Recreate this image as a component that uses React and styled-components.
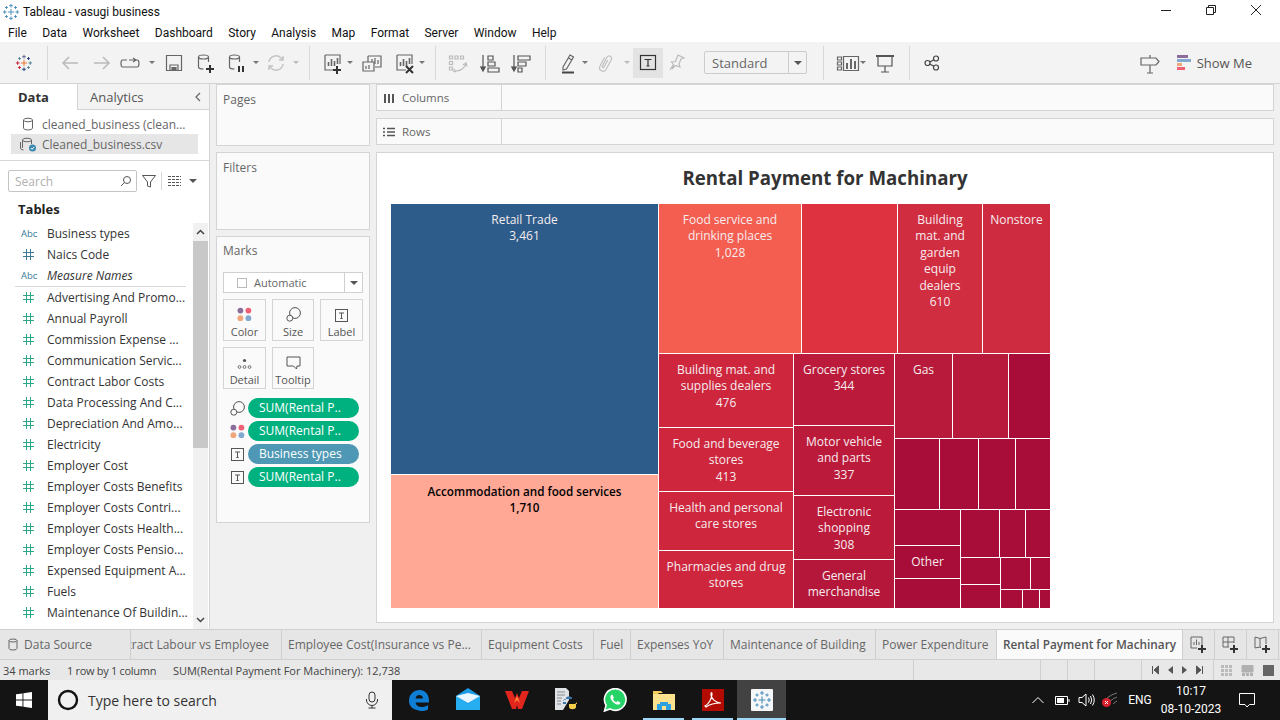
import React from 'react';
import styled, { createGlobalStyle } from 'styled-components';

const UI_FONT = '"Open Sans", "Liberation Sans", sans-serif';
const WIN_FONT = 'Roboto, "Liberation Sans", sans-serif';

const GlobalStyle = createGlobalStyle`
  html, body {
    margin: 0;
    padding: 0;
    width: 1280px;
    height: 720px;
    overflow: hidden;
    background: #f0f0f0;
  }
  * { box-sizing: border-box; }
`;

const Page = styled.div`
  width: 1280px;
  height: 720px;
  display: flex;
  flex-direction: column;
  font-family: ${UI_FONT};
  color: #555;
`;

/* window chrome */
const TitleBar = styled.div`
  height: 24px;
  background: #fff;
  display: flex;
  align-items: center;
  padding-left: 2px;
  font-family: ${WIN_FONT};
  font-size: 12px;
  color: #111;
  gap: 3px;
`;

const WindowButtons = styled.div`
  margin-left: auto;
  padding-right: 2px;
  display: flex;
  align-self: flex-start;
`;

const WindowButton = styled.div`
  width: 45px;
  height: 20px;
  display: flex;
  align-items: center;
  justify-content: center;
`;

const MenuBar = styled.div`
  height: 19px;
  background: #fff;
  display: flex;
  align-items: center;
  padding-left: 8px;
  gap: 15.4px;
  font-family: ${WIN_FONT};
  font-size: 12px;
  color: #111;
`;

/* toolbar */
const Toolbar = styled.div`
  height: 41px;
  background: #f3f3f3;
  display: flex;
  align-items: center;
  padding: 4px 0 4px 8px;
  flex: none;
`;

const ToolItem = styled.div`
  width: ${p => p.$w}px;
  height: 30px;
  flex: none;
  display: flex;
  align-items: center;
  justify-content: center;
  background: ${p => (p.$active ? '#e3e3e3' : 'transparent')};
`;

const ToolSep = styled.div`
  width: ${p => p.$w}px;
  height: 34px;
  flex: none;
  display: flex;
  justify-content: center;
  &::after {
    content: '';
    width: 1px;
    height: 100%;
    background: #d8d8d8;
  }
`;

const Caret = styled.span`
  width: 0;
  height: 0;
  flex: none;
  border-left: 3px solid transparent;
  border-right: 3px solid transparent;
  border-top: 3px solid ${p => (p.$dim ? '#bbb' : '#777')};
`;

const StandardSelect = styled.div`
  width: 103px;
  height: 23px;
  margin-left: 13px;
  flex: none;
  border: 1px solid #ccc;
  border-radius: 2px;
  display: flex;
  align-items: center;
  justify-content: space-between;
  font-size: 13px;
  color: #666;
  padding-left: 7px;
`;

const SelectArrow = styled.div`
  width: 18px;
  height: 100%;
  border-left: 1px solid #ccc;
  display: flex;
  align-items: center;
  justify-content: center;
`;

const LargeCaret = styled(Caret)`
  border-left-width: 4px;
  border-right-width: 4px;
  border-top-width: 4px;
  border-top-color: #555;
  margin-left: ${p => p.$ml || 0}px;
`;

const ToolbarRight = styled.div`
  margin-left: auto;
  display: flex;
  align-items: center;
  gap: 15px;
  padding-right: 28px;
  font-size: 13px;
  color: #555;
`;

const ShowMe = styled.div`
  display: flex;
  align-items: center;
  gap: 6px;
`;

/* main */
const Main = styled.div`
  height: 546px;
  flex: none;
  display: flex;
  background: #f0f0f0;
  border-top: 1px solid #d4d4d4;
`;

const DataPanel = styled.div`
  width: 210px;
  flex: none;
  background: #fafafa;
  border-right: 1px solid #d4d4d4;
  display: flex;
  flex-direction: column;
`;

const PanelTabs = styled.div`
  height: 26px;
  flex: none;
  display: flex;
  align-items: center;
  font-size: 13px;
`;

const DataTab = styled.div`
  width: 78px;
  height: 100%;
  display: flex;
  align-items: center;
  padding-left: 18px;
  font-weight: 700;
  color: #333;
  background: #fff;
  border-right: 1px solid #d4d4d4;
`;

const AnalyticsTab = styled.div`
  flex: 1;
  height: 100%;
  display: flex;
  align-items: center;
  justify-content: space-between;
  padding: 0 7px 0 12px;
  color: #555;
  background: #f3f3f3;
  border-bottom: 1px solid #d4d4d4;
`;

const Sources = styled.div`
  height: 51px;
  flex: none;
  padding-top: 4px;
  background: #fff;
  border-bottom: 1px solid #d8d8d8;
`;

const SourceRow = styled.div`
  height: 20px;
  margin: 0 11px;
  padding-left: 9px;
  display: flex;
  align-items: center;
  gap: 6px;
  font-size: 12px;
  color: #666;
  background: ${p => (p.$selected ? '#e6e6e6' : 'transparent')};
`;

const SourceIcon = styled.span`
  width: 16px;
  flex: none;
  display: flex;
  justify-content: center;
`;

const SearchRow = styled.div`
  height: 39px;
  flex: none;
  display: flex;
  align-items: center;
  padding: 1px 0 0 8px;
  background: #fff;
`;

const SearchBox = styled.div`
  width: 129px;
  height: 22px;
  border: 1px solid #c4c4c4;
  border-radius: 2px;
  display: flex;
  align-items: center;
  justify-content: space-between;
  padding: 0 4px 0 6px;
  font-size: 12px;
  color: #b0b0b0;
  margin-right: 4px;
`;

const SearchSep = styled.div`
  width: 1px;
  height: 18px;
  background: #d8d8d8;
  margin: 0 6px 0 4px;
`;

const TablesTitle = styled.div`
  height: 17px;
  flex: none;
  padding: 0 0 0 18px;
  display: flex;
  align-items: center;
  font-size: 13px;
  font-weight: 700;
  color: #222;
  background: #fff;
`;

const FieldArea = styled.div`
  flex: 1;
  min-height: 0;
  padding-top: 6px;
  display: flex;
  background: #fff;
`;

const FieldList = styled.div`
  width: 193px;
  flex: none;
  overflow: hidden;
`;

const FieldRow = styled.div`
  height: 21px;
  margin-left: 15px;
  display: flex;
  align-items: center;
  font-size: 12px;
  color: #333;
  font-style: ${p => (p.$italic ? 'italic' : 'normal')};
  white-space: nowrap;
`;

const FieldType = styled.span`
  width: 32px;
  flex: none;
  display: flex;
  align-items: center;
  padding-left: ${p => (p.$abc ? 6 : 8)}px;
  font-style: normal;
  font-size: 9.5px;
  line-height: 1;
  color: #3b7a99;
`;

const FieldDivider = styled.div`
  height: 1px;
  background: #d8d8d8;
  margin: 0 7px 0 15px;
`;

const Scrollbar = styled.div`
  width: 15px;
  flex: none;
  margin-right: 1px;
  background: #f1f1f1;
  display: flex;
  flex-direction: column;
`;

const ScrollArrow = styled.div`
  height: 18px;
  flex: none;
  display: flex;
  align-items: center;
  justify-content: center;
`;

const ScrollThumb = styled.div`
  height: 207px;
  flex: none;
  background: #c8c8c8;
`;

const ScrollFill = styled.div`
  flex: 1;
`;

/* shelves column */
const ShelfColumn = styled.div`
  width: 154px;
  margin-left: 6px;
  flex: none;
  display: flex;
  flex-direction: column;
  gap: 6px;
`;

const Card = styled.div`
  height: ${p => p.$h}px;
  flex: none;
  background: #fafafa;
  border: 1px solid #d4d4d4;
  padding: 6px 6px 0;
  font-size: 12px;
  color: #666;
`;

const MarksTitle = styled.div`
  margin-bottom: 13px;
  line-height: 16px;
`;

const MarksSelect = styled.div`
  height: 21px;
  margin-bottom: 6px;
  background: #fff;
  border: 1px solid #d0d0d0;
  display: flex;
  align-items: center;
  font-size: 11px;
  color: #666;
`;

const MarkCheck = styled.span`
  width: 10px;
  height: 10px;
  margin: 0 7px 0 13px;
  border: 1px solid #bbb;
  background: #fff;
`;

const MarkSelectArrow = styled.div`
  margin-left: auto;
  width: 18px;
  height: 100%;
  border-left: 1px solid #d0d0d0;
  display: flex;
  align-items: center;
  justify-content: center;
`;

const MarkGrid = styled.div`
  display: grid;
  grid-template-columns: 43px 42px 43px;
  grid-auto-rows: 42px;
  column-gap: 6px;
  row-gap: 6px;
`;

const MarkButton = styled.div`
  background: #fafafa;
  border: 1px solid #d4d4d4;
  display: flex;
  flex-direction: column;
  align-items: center;
  justify-content: flex-end;
  padding-bottom: 1px;
  font-size: 11px;
  line-height: 15px;
  color: #555;
  gap: 2px;
`;

const PillList = styled.div`
  margin-top: 9px;
  display: flex;
  flex-direction: column;
  gap: 3px;
`;

const PillRow = styled.div`
  display: flex;
  align-items: center;
  height: 20px;
  padding-left: 7px;
  gap: 4px;
`;

const PillIcon = styled.div`
  width: 14px;
  height: 14px;
  flex: none;
  display: flex;
  align-items: center;
  justify-content: center;
`;

const Pill = styled.div`
  width: 111px;
  height: 20px;
  border-radius: 10px;
  padding-left: 11px;
  background: ${p => (p.$blue ? '#4e98b5' : '#00b180')};
  color: #fff;
  font-size: 12px;
  line-height: 20px;
  white-space: nowrap;
`;

/* view */
const ViewColumn = styled.div`
  width: 898px;
  margin-left: 6px;
  flex: none;
  display: flex;
  flex-direction: column;
  gap: 7px;
`;

const Shelf = styled.div`
  height: 27px;
  flex: none;
  display: flex;
  background: #fafafa;
  border: 1px solid #d4d4d4;
`;

const ShelfLabel = styled.div`
  width: 125px;
  flex: none;
  border-right: 1px solid #d4d4d4;
  display: flex;
  align-items: center;
  padding-left: 6px;
  gap: 7px;
  font-size: 11.5px;
  color: #666;
`;

const Viz = styled.div`
  height: 471px;
  flex: none;
  background: #fff;
  border: 1px solid #d4d4d4;
  padding-left: 13px;
  display: flex;
  flex-direction: column;
`;

const VizTitle = styled.div`
  width: 870px;
  height: 51px;
  flex: none;
  text-align: center;
  padding-top: 11px;
  font-size: 18.7px;
  line-height: 27px;
  font-weight: 700;
  color: #333;
`;

const Treemap = styled.div`
  width: 659px;
  height: 404px;
  margin-left: 1px;
  flex: none;
  display: flex;
  gap: 1px;
  background: #fff;
`;

const Split = styled.div`
  display: flex;
  flex-direction: ${p => p.$dir};
  flex: 0 0 ${p => p.$size}px;
  gap: 1px;
  background: #fff;
`;

const Leaf = styled.div`
  flex: 0 0 ${p => p.$size}px;
  background: ${p => p.$bg};
  color: ${p => (p.$dark ? '#000' : '#f6ecee')};
  font-size: ${p => (p.$dark ? 11.7 : 12)}px;
  font-weight: ${p => (p.$dark ? 600 : 400)};
  line-height: 16.4px;
  text-align: center;
  padding: 8px 2px 0;
  overflow: hidden;
`;

/* sheet tabs */
const TabBar = styled.div`
  height: 31px;
  flex: none;
  display: flex;
  background: #e6e6e6;
  border-top: 1px solid #d0d0d0;
  border-bottom: 1px solid #d0d0d0;
  font-size: 12px;
  color: #666;
`;

const SheetTab = styled.div`
  width: ${p => p.$w}px;
  flex: none;
  border-right: 1px solid #cfcfcf;
  overflow: hidden;
  white-space: nowrap;
  display: flex;
  align-items: center;
  justify-content: ${p => (p.$clip ? 'flex-end' : 'flex-start')};
  padding: ${p => (p.$clip ? '0 12px 0 0' : `0 0 0 ${p.$pl || 6}px`)};
  gap: 6px;
  ${p => p.$active && `
    background: #fafafa;
    font-size: 11.8px;
    font-weight: 600;
    padding-bottom: 2px;
    color: #555;
  `}
`;

const AddTab = styled.div`
  width: 32px;
  flex: none;
  border-right: 1px solid #cfcfcf;
  display: flex;
  align-items: center;
  justify-content: center;
`;

/* status bar */
const StatusBar = styled.div`
  height: 20px;
  flex: none;
  display: flex;
  align-items: center;
  background: #e8e8e8;
  font-size: 11px;
  color: #444;
`;

const StatusText = styled.span`
  width: ${p => p.$w}px;
  flex: none;
  white-space: nowrap;
  padding-left: ${p => p.$pl || 0}px;
  letter-spacing: ${p => (p.$tight ? -0.3 : 0)}px;
`;

const StatusCell = styled.div`
  width: ${p => p.$w}px;
  height: 100%;
  flex: none;
  border-left: 1px solid #d0d0d0;
  display: flex;
  align-items: center;
  justify-content: center;
  gap: ${p => p.$gap || 0}px;
`;

/* windows taskbar */
const Taskbar = styled.div`
  height: 40px;
  flex: none;
  display: flex;
  align-items: center;
  background: #141414;
  color: #fff;
  font-family: ${WIN_FONT};
`;

const StartButton = styled.div`
  width: 48px;
  height: 100%;
  flex: none;
  display: flex;
  align-items: center;
  justify-content: center;
`;

const TaskSearch = styled.div`
  width: 344px;
  height: 100%;
  flex: none;
  background: #f0f0f0;
  display: flex;
  align-items: center;
  padding: 0 13px 0 9px;
  gap: 9px;
  color: #333;
  font-family: ${UI_FONT};
  font-size: 14px;
  span { flex: 1; }
`;

const TaskApps = styled.div`
  display: flex;
  height: 100%;
  padding-left: 2px;
`;

const TaskApp = styled.div`
  width: 49px;
  height: 100%;
  flex: none;
  position: relative;
  display: flex;
  align-items: center;
  justify-content: center;
  background: ${p => (p.$active ? '#424242' : 'transparent')};
  ${p => p.$open && `
    &::after {
      content: '';
      position: absolute;
      left: ${p.$active ? 0 : 4}px;
      right: ${p.$active ? 0 : 4}px;
      bottom: 0;
      height: 2px;
      background: #9fd8f5;
    }
  `}
`;

const Tray = styled.div`
  margin-left: auto;
  padding-right: 10px;
  height: 100%;
  display: flex;
  align-items: center;
  font-size: 12px;
`;

const TrayItem = styled.div`
  width: ${p => p.$w}px;
  flex: none;
  display: flex;
  align-items: center;
  justify-content: center;
`;

const Clock = styled.div`
  width: 66px;
  flex: none;
  text-align: center;
  line-height: 18px;
  font-size: 12px;
`;

/* drawn icons */
const IconSvg = styled.svg`
  flex: none;
  overflow: visible;
`;

const Svg = ({ w = 24, h = 24, children, stroke = '#666', sw = 1.2 }) => (
  <IconSvg width={w} height={h} viewBox={`0 0 ${w} ${h}`} fill="none" stroke={stroke} strokeWidth={sw}>
    {children}
  </IconSvg>
);

const TableauMark = ({ size = 20, mono }) => {
  const c = mono
    ? ['#4d8fbb', '#4d8fbb', '#4d8fbb', '#4d8fbb', '#4d8fbb']
    : ['#e8762d', '#59879b', '#c72037', '#1f447e', '#5b6591'];
  const plus = (x, y, r, col, k) => (
    <path key={k} d={`M${x - r} ${y}H${x + r}M${x} ${y - r}V${y + r}`} stroke={col} strokeWidth={1.1} />
  );
  return (
    <IconSvg width={size} height={size} viewBox="0 0 20 20" fill="none">
      {plus(10, 10, 3.5, c[0], 'a')}
      {plus(10, 3, 2, c[4], 'b')}
      {plus(10, 17, 2, c[3], 'c')}
      {plus(3, 10, 2, c[2], 'd')}
      {plus(17, 10, 2, c[1], 'e')}
      {plus(5, 5, 1.6, c[1], 'f')}
      {plus(15, 5, 1.6, c[3], 'g')}
      {plus(5, 15, 1.6, c[2], 'h')}
      {plus(15, 15, 1.6, c[1], 'i')}
    </IconSvg>
  );
};

const Cylinder = ({ h = 20, children }) => (
  <Svg h={h}>
    <ellipse cx="9.5" cy="6" rx="5" ry="2" />
    <path d="M4.5 6V16q0 2 5 2M14.5 6v5" />
    {children}
  </Svg>
);

const DarkPlus = ({ x, y }) => <path d={`M${x - 4} ${y}H${x + 4}M${x} ${y - 4}V${y + 4}`} stroke="#333" strokeWidth="2" />;

const BarSheet = ({ children }) => (
  <Svg>
    <path d="M6 4H21V13M15 19H6V4" />
    <path d="M9.5 15V11M12.5 15V8M15.5 15V10M18.5 13V7" strokeWidth="1.6" />
    {children}
  </Svg>
);

const TBox = ({ size = 13 }) => (
  <IconSvg width={size} height={size} viewBox="0 0 13 13" fill="none" stroke="#555">
    <rect x=".5" y=".5" width="12" height="12" />
    <path d="M4 4H9M6.5 4V9.5M5.3 9.5H7.7" />
  </IconSvg>
);

const ColorDots = () => (
  <IconSvg width="15" height="15" viewBox="0 0 15 15">
    <circle cx="3.4" cy="3.6" r="2.9" fill="#8a6d9b" />
    <circle cx="11.4" cy="3.6" r="2.9" fill="#ef6074" />
    <circle cx="3.4" cy="11.2" r="2.9" fill="#f0a679" />
    <circle cx="11.4" cy="11.2" r="2.9" fill="#83a9d2" />
  </IconSvg>
);

const SizeGlyph = () => (
  <IconSvg width="15" height="15" viewBox="0 0 15 15" fill="none" stroke="#555">
    <circle cx="9" cy="6" r="5.4" />
    <circle cx="3.8" cy="11.2" r="3" fill="#fafafa" />
  </IconSvg>
);

const HashIcon = ({ stroke = '#2fa58a' }) => (
  <Svg w={11} h={11} stroke={stroke} sw={1}>
    <path d="M3.500 0v11M7.500 0v11M0 3.500h11M0 7.500h11" />
  </Svg>
);

const DARK = '#a70d38';

const treemap = [
  {
    dir: 'column',
    size: 267,
    kids: [
      { size: 270, bg: '#2e5c8a', text: ['Retail Trade', '3,461'] },
      { size: 133, bg: '#ffa896', dark: true, text: ['Accommodation and food services', '1,710'] },
    ],
  },
  {
    dir: 'column',
    size: 391,
    kids: [
      {
        dir: 'row',
        size: 149,
        kids: [
          { size: 142, bg: '#f35e50', text: ['Food service and', 'drinking places', '1,028'] },
          { size: 95, bg: '#de3241' },
          { size: 84, bg: '#d12d41', text: ['Building', 'mat. and', 'garden', 'equip', 'dealers', '610'] },
          { size: 67, bg: '#ce2a40', text: ['Nonstore'] },
        ],
      },
      {
        dir: 'row',
        size: 254,
        kids: [
          {
            dir: 'column',
            size: 134,
            kids: [
              { size: 73, bg: '#cd263d', text: ['Building mat. and', 'supplies dealers', '476'] },
              { size: 63, bg: '#cd263d', text: ['Food and beverage', 'stores', '413'] },
              { size: 58, bg: '#cd263d', text: ['Health and personal', 'care stores'] },
              { size: 57, bg: '#cd263d', text: ['Pharmacies and drug', 'stores'] },
            ],
          },
          {
            dir: 'column',
            size: 100,
            kids: [
              { size: 71, bg: '#bb1a3b', text: ['Grocery stores', '344'] },
              { size: 69, bg: '#bb1a3b', text: ['Motor vehicle', 'and parts', '337'] },
              { size: 63, bg: '#bb1a3b', text: ['Electronic', 'shopping', '308'] },
              { size: 48, bg: '#b5173a', text: ['General', 'merchandise'] },
            ],
          },
          {
            dir: 'column',
            size: 155,
            kids: [
              {
                dir: 'row',
                size: 84,
                kids: [
                  { size: 57, bg: '#b81a3b', text: ['Gas'] },
                  { size: 55, bg: '#b81a3b' },
                  { size: 41, bg: DARK },
                ],
              },
              {
                dir: 'row',
                size: 70,
                kids: [
                  { size: 44, bg: DARK },
                  { size: 38, bg: DARK },
                  { size: 36, bg: DARK },
                  { size: 34, bg: DARK },
                ],
              },
              {
                dir: 'row',
                size: 98,
                kids: [
                  {
                    dir: 'column',
                    size: 65,
                    kids: [
                      { size: 35, bg: DARK },
                      { size: 32, bg: DARK, text: ['Other'] },
                      { size: 29, bg: DARK },
                    ],
                  },
                  {
                    dir: 'column',
                    size: 89,
                    kids: [
                      {
                        dir: 'row',
                        size: 47,
                        kids: [
                          { size: 38, bg: DARK },
                          { size: 25, bg: DARK },
                          { size: 24, bg: DARK },
                        ],
                      },
                      {
                        dir: 'row',
                        size: 50,
                        kids: [
                          {
                            dir: 'column',
                            size: 39,
                            kids: [
                              { size: 26, bg: DARK },
                              { size: 23, bg: DARK },
                            ],
                          },
                          {
                            dir: 'column',
                            size: 49,
                            kids: [
                              {
                                dir: 'row',
                                size: 31,
                                kids: [
                                  { size: 29, bg: DARK },
                                  { size: 19, bg: DARK },
                                ],
                              },
                              {
                                dir: 'row',
                                size: 18,
                                kids: [
                                  { size: 21, bg: DARK },
                                  { size: 16, bg: DARK },
                                  { size: 10, bg: DARK },
                                ],
                              },
                            ],
                          },
                        ],
                      },
                    ],
                  },
                ],
              },
            ],
          },
        ],
      },
    ],
  },
];

function TreeNode({ node }) {
  if (node.kids) {
    return (
      <Split $dir={node.dir} $size={node.size}>
        {node.kids.map((kid, i) => (
          <TreeNode key={i} node={kid} />
        ))}
      </Split>
    );
  }
  return (
    <Leaf $size={node.size} $bg={node.bg} $dark={node.dark}>
      {(node.text || []).map(line => (
        <div key={line}>{line}</div>
      ))}
    </Leaf>
  );
}

const fields = [
  'Advertising And Promo...',
  'Annual Payroll',
  'Commission Expense ...',
  'Communication Servic...',
  'Contract Labor Costs',
  'Data Processing And C...',
  'Depreciation And Amo...',
  'Electricity',
  'Employer Cost',
  'Employer Costs Benefits',
  'Employer Costs Contri...',
  'Employer Costs Health...',
  'Employer Costs Pensio...',
  'Expensed Equipment A...',
  'Fuels',
  'Maintenance Of Buildin...',
];

const sheetTabs = [
  ['Employee Cost(Insurance vs Pe...', 200],
  ['Equipment Costs', 112],
  ['Fuel', 37],
  ['Expenses YoY', 93],
  ['Maintenance of Building', 152],
  ['Power Expenditure', 121],
];

export default function App() {
  return (
    <Page>
      <GlobalStyle />
      <TitleBar>
        <TableauMark size={18} mono />
        <span>Tableau - vasugi business</span>
        <WindowButtons>
          <WindowButton>
            <Svg w={12} h={12} stroke="#222" sw={1}><path d="M1 6.5H11" /></Svg>
          </WindowButton>
          <WindowButton>
            <Svg w={12} h={12} stroke="#222" sw={1}><path d="M1.5 3.5h7v7h-7zM3.5 3.5v-2h7v7h-2" /></Svg>
          </WindowButton>
          <WindowButton>
            <Svg w={12} h={12} stroke="#222" sw={1}><path d="M1 1l10 10M11 1L1 11" /></Svg>
          </WindowButton>
        </WindowButtons>
      </TitleBar>
      <MenuBar>
        {['File', 'Data', 'Worksheet', 'Dashboard', 'Story', 'Analysis', 'Map', 'Format', 'Server', 'Window', 'Help'].map(m => (
          <span key={m}>{m}</span>
        ))}
      </MenuBar>
      <Toolbar>
        <ToolItem $w={32}><TableauMark size={18} /></ToolItem>
        <ToolSep $w={14} />
        <ToolItem $w={32}>
          <Svg stroke="#bbb" sw={1.6}><path d="M20 12H5M11 6l-6 6 6 6" /></Svg>
        </ToolItem>
        <ToolItem $w={32}>
          <Svg stroke="#bbb" sw={1.6}><path d="M4 12H19M13 6l6 6-6 6" /></Svg>
        </ToolItem>
        <ToolItem $w={26}>
          <Svg><path d="M8 9H3.500Q2 9 2 12.500T3.500 16H18q2 0 2-3.500T18 9h-8M14 7l3 2-3 2" /></Svg>
        </ToolItem>
        <ToolItem $w={16}><Caret /></ToolItem>
        <ToolItem $w={28}>
          <Svg><path d="M4.500 4.500h15v15h-15zM8 19V14h8v5" /><path d="M10 16.500h4v3h-4z" fill="#666" /></Svg>
        </ToolItem>
        <ToolItem $w={36}>
          <Cylinder h={24}><DarkPlus x={16} y={18} /></Cylinder>
        </ToolItem>
        <ToolItem $w={26}>
          <Cylinder h={24}><path d="M14 15v6M18 15v6" stroke="#333" strokeWidth="2" /></Cylinder>
        </ToolItem>
        <ToolItem $w={12}><Caret /></ToolItem>
        <ToolItem $w={28}>
          <Svg stroke="#c4c4c4" sw={1.5}><path d="M5 11a7 7 0 0 1 12-4l2 2M19 13a7 7 0 0 1-12 4l-2-2M19 5v4h-4M5 19v-4h4" /></Svg>
        </ToolItem>
        <ToolItem $w={12}><Caret $dim /></ToolItem>
        <ToolSep $w={14} />
        <ToolItem $w={30}><BarSheet><DarkPlus x={18} y={19} /></BarSheet></ToolItem>
        <ToolItem $w={8}><Caret /></ToolItem>
        <ToolItem $w={36}>
          <Svg>
            <path d="M8 5h13v11h-6M8 5v6" />
            <path d="M3 11h11v9H3z" />
            <path d="M12 11V8M15 13V7M18 13V9M6 18v-3M9 18v-4" />
          </Svg>
        </ToolItem>
        <ToolItem $w={26}>
          <BarSheet><path d="M15 15l7 7M22 15l-7 7" stroke="#333" strokeWidth="2" /></BarSheet>
        </ToolItem>
        <ToolItem $w={12}><Caret /></ToolItem>
        <ToolSep $w={14} />
        <ToolItem $w={30}>
          <Svg stroke="#bbb">
            <path d="M4.500 5h3v3h-3zM10 5h3v3h-3zM15.500 5h3v3h-3zM4.500 10.500h3v3h-3zM4.500 16h3v3h-3z" />
            <path d="M10 20q8 0 11-7M18 14l3-2 1 3.500M10 18l-1.500 2 2.500 1" />
          </Svg>
        </ToolItem>
        <ToolItem $w={36}>
          <Svg stroke="#555">
            <path d="M5 4V19M2.500 15.500L5 20l2.500-4.500" fill="#555" />
            <path d="M10 5h5v4h-5zM10 11h7v4h-7zM10 17h11v4h-11z" />
          </Svg>
        </ToolItem>
        <ToolItem $w={26}>
          <Svg stroke="#555">
            <path d="M5 4V19M2.500 15.500L5 20l2.500-4.500" fill="#555" />
            <path d="M9 5h12v4H9zM9 11h8v4H9zM9 17h4v4H9z" />
          </Svg>
        </ToolItem>
        <ToolSep $w={22} />
        <ToolItem $w={24}>
          <Svg>
            <path d="M7 16L14 4l3.500 2-7 12-3.500 1zM12.500 7l3.500 2" />
            <path d="M6 21.500H18" stroke="#444" strokeWidth="2" />
          </Svg>
        </ToolItem>
        <ToolItem $w={10}><Caret /></ToolItem>
        <ToolItem $w={30}>
          <Svg stroke="#c0c0c0" sw={1.2}>
            <path transform="rotate(28 12 12)" d="M9 7v10a3.500 3.500 0 0 0 7 0V6a2.500 2.500 0 0 0-5 0v10a1 1 0 0 0 2 0V8" />
          </Svg>
        </ToolItem>
        <ToolItem $w={13}><Caret $dim /></ToolItem>
        <ToolItem $w={30} $active>
          <Svg>
            <rect x="4.500" y="4.500" width="15" height="14" stroke="#333" />
            <path d="M8.500 8.500h7M12 8.500v6.500M10.500 15h3" stroke="#333" />
          </Svg>
        </ToolItem>
        <ToolItem $w={28}>
          <Svg stroke="#bbb">
            <path d="M13 4l6 3-3 1-2 5 1 3-4.500-1.500L7 18l1.500-4.500L6.500 11l4-.5z" />
            <path d="M8 14l-3 5" />
          </Svg>
        </ToolItem>
        <StandardSelect>
          <span>Standard</span>
          <SelectArrow><LargeCaret /></SelectArrow>
        </StandardSelect>
        <ToolSep $w={32} />
        <ToolItem $w={18}>
          <Svg>
            <path d="M1.500 6h4v3h-4zM1.500 11h4v3h-4zM1.500 16h4v3h-4zM7.500 5.500h15v14h-15z" />
            <path d="M11 18v-6M15 18V8M19 18v-8" strokeWidth="2" />
          </Svg>
        </ToolItem>
        <ToolItem $w={12}><Caret /></ToolItem>
        <ToolItem $w={32}>
          <Svg stroke="#555">
            <path d="M3 5H21" strokeWidth="2" />
            <path d="M5 5v10h14V5M12 15v6M8 21h8" />
          </Svg>
        </ToolItem>
        <ToolSep $w={16} />
        <ToolItem $w={30}>
          <Svg stroke="#444" sw={1.2}>
            <circle cx="7.500" cy="12" r="2.500" />
            <circle cx="16" cy="7.500" r="2.500" />
            <circle cx="16" cy="16.500" r="2.500" />
            <path d="M9.800 11l4-2.300M9.800 13l4 2.300" />
          </Svg>
        </ToolItem>
        <ToolbarRight>
          <Svg h={24}>
            <path d="M3 7h15l3 3.500-3 3.500H3zM12 4v3M12 14v8M9 22h6" />
          </Svg>
          <ShowMe>
            <IconSvg width="14" height="16" viewBox="0 0 14 16">
              <rect x="0" y="0" width="11" height="3" fill="#8a6d9b" />
              <rect x="0" y="4" width="14" height="3" fill="#83a9d2" />
              <rect x="0" y="8" width="5" height="3" fill="#f0a679" />
              <rect x="0" y="12" width="8" height="3" fill="#ef6074" />
            </IconSvg>
            <span>Show Me</span>
          </ShowMe>
        </ToolbarRight>
      </Toolbar>
      <Main>
        <DataPanel>
          <PanelTabs>
            <DataTab>Data</DataTab>
            <AnalyticsTab>
              <span>Analytics</span>
              <Svg w={8} h={10} stroke="#666"><path d="M6 1L2 5l4 4" /></Svg>
            </AnalyticsTab>
          </PanelTabs>
          <Sources>
            <SourceRow>
              <SourceIcon>
                <Svg w={12} h={14} stroke="#666" sw={1}>
                  <ellipse cx="6" cy="3" rx="4.500" ry="1.800" />
                  <path d="M1.500 3v8q0 2 4.500 2t4.500-2V3" />
                </Svg>
              </SourceIcon>
              <span>cleaned_business (clean...</span>
            </SourceRow>
            <SourceRow $selected>
              <SourceIcon>
                <Svg w={16} h={16} stroke="#666" sw={1}>
                  <ellipse cx="7" cy="4" rx="4.500" ry="1.800" />
                  <path d="M2.500 4v8M11.500 4v4M0.500 6v6q0 2 3 2" />
                  <circle cx="12.500" cy="12" r="3.500" fill="#3b89b0" stroke="none" />
                  <path d="M10.800 12l1.300 1.300 2-2.300" stroke="#fff" />
                </Svg>
              </SourceIcon>
              <span>Cleaned_business.csv</span>
            </SourceRow>
          </Sources>
          <SearchRow>
            <SearchBox>
              <span>Search</span>
              <Svg w={12} h={12} stroke="#555" sw={1}><circle cx="7" cy="5" r="3.500" /><path d="M4.500 7.500L1 11" /></Svg>
            </SearchBox>
            <Svg w={16} h={16} stroke="#555" sw={1}><path d="M1.500 2.500h13L9.500 9v5l-3-1V9z" /></Svg>
            <SearchSep />
            <Svg w={14} h={12} stroke="#555" sw={1}><path d="M0 1.500h13M0 4.500h13M0 7.500h13M0 10.500h13" strokeDasharray="3 1" /></Svg>
            <LargeCaret $ml={7} />
          </SearchRow>
          <TablesTitle>Tables</TablesTitle>
          <FieldArea>
            <FieldList>
              <FieldRow><FieldType $abc>Abc</FieldType>Business types</FieldRow>
              <FieldRow><FieldType><HashIcon stroke="#3b7a99" /></FieldType>Naics Code</FieldRow>
              <FieldRow $italic><FieldType $abc>Abc</FieldType>Measure Names</FieldRow>
              <FieldDivider />
              {fields.map(name => (
                <FieldRow key={name}><FieldType><HashIcon /></FieldType>{name}</FieldRow>
              ))}
            </FieldList>
            <Scrollbar>
              <ScrollArrow>
                <Svg w={9} h={6} stroke="#444" sw={1.5}><path d="M1 5l3.500-3.500L8 5" /></Svg>
              </ScrollArrow>
              <ScrollThumb />
              <ScrollFill />
              <ScrollArrow>
                <Svg w={9} h={6} stroke="#444" sw={1.5}><path d="M1 1l3.500 3.500L8 1" /></Svg>
              </ScrollArrow>
            </Scrollbar>
          </FieldArea>
        </DataPanel>
        <ShelfColumn>
          <Card $h={62}>Pages</Card>
          <Card $h={78}>Filters</Card>
          <Card $h={287}>
            <MarksTitle>Marks</MarksTitle>
            <MarksSelect>
              <MarkCheck />
              Automatic
              <MarkSelectArrow><LargeCaret /></MarkSelectArrow>
            </MarksSelect>
            <MarkGrid>
              <MarkButton><ColorDots />Color</MarkButton>
              <MarkButton><SizeGlyph />Size</MarkButton>
              <MarkButton><TBox />Label</MarkButton>
              <MarkButton>
                <Svg w={15} h={12} stroke="#555" sw={0.8}>
                  <circle cx="7.500" cy="2.500" r="1.600" fill="#555" stroke="none" />
                  <circle cx="2.500" cy="9" r="1.400" />
                  <circle cx="7.500" cy="9" r="1.400" />
                  <circle cx="12.500" cy="9" r="1.400" />
                </Svg>
                Detail
              </MarkButton>
              <MarkButton>
                <Svg w={15} h={14} stroke="#555" sw={1}><path d="M1 1h13v9h-3l-.500 3-3-3H1z" /></Svg>
                Tooltip
              </MarkButton>
            </MarkGrid>
            <PillList>
              <PillRow><PillIcon><SizeGlyph /></PillIcon><Pill>SUM(Rental P..</Pill></PillRow>
              <PillRow><PillIcon><ColorDots /></PillIcon><Pill>SUM(Rental P..</Pill></PillRow>
              <PillRow><PillIcon><TBox /></PillIcon><Pill $blue>Business types</Pill></PillRow>
              <PillRow><PillIcon><TBox /></PillIcon><Pill>SUM(Rental P..</Pill></PillRow>
            </PillList>
          </Card>
        </ShelfColumn>
        <ViewColumn>
          <Shelf>
            <ShelfLabel>
              <Svg w={12} h={12} stroke="#555" sw={2}><path d="M2 2v9M6 2v9M10 2v9" /></Svg>
              Columns
            </ShelfLabel>
          </Shelf>
          <Shelf>
            <ShelfLabel>
              <Svg w={12} h={12} stroke="#555" sw={1.5}><path d="M0 2.500h2M4 2.500h8M0 6h2M4 6h8M0 9.500h2M4 9.500h8" /></Svg>
              Rows
            </ShelfLabel>
          </Shelf>
          <Viz>
            <VizTitle>Rental Payment for Machinary</VizTitle>
            <Treemap>
              {treemap.map((kid, i) => (
                <TreeNode key={i} node={kid} />
              ))}
            </Treemap>
          </Viz>
        </ViewColumn>
      </Main>
      <TabBar>
        <SheetTab $w={131} $pl={8}>
          <Svg w={10} h={13} stroke="#666" sw={1}>
            <ellipse cx="5" cy="2.500" rx="4" ry="1.500" />
            <path d="M1 2.500v8q0 1.500 4 1.500t4-1.500v-8" />
          </Svg>
          Data Source
        </SheetTab>
        <SheetTab $w={151} $clip>Contract Labour vs Employee</SheetTab>
        {sheetTabs.map(([name, w]) => (
          <SheetTab key={name} $w={w}>{name}</SheetTab>
        ))}
        <SheetTab $w={186} $active>Rental Payment for Machinary</SheetTab>
        <AddTab>
          <Svg w={18} h={18} stroke="#666" sw={1}>
            <path d="M1 1h11v8M7 12H1V1M4 9V6M6.500 9V3.500M9 9V6" />
            <DarkPlus x={12} y={13} />
          </Svg>
        </AddTab>
        <AddTab>
          <Svg w={18} h={18} stroke="#666" sw={1}>
            <path d="M1 1h11v6M7 11H1V1M1 6h11M6 1v10" />
            <DarkPlus x={12} y={13} />
          </Svg>
        </AddTab>
        <AddTab>
          <Svg w={18} h={18} stroke="#666" sw={1}>
            <path d="M1 1l5 1.500L12 1v7M7 12l-1-1-5 1V1M6 2.500V11" />
            <DarkPlus x={12} y={13} />
          </Svg>
        </AddTab>
      </TabBar>
      <StatusBar>
        <StatusText $w={67} $pl={3}>34 marks</StatusText>
        <StatusText $w={106} $tight>1 row by 1 column</StatusText>
        <StatusText $w={740}>SUM(Rental Payment For Machinery): 12,738</StatusText>
        <StatusCell $w={127} />
        <StatusCell $w={27} />
        <StatusCell $w={27} />
        <StatusCell $w={47} />
        <StatusCell $w={72} $gap={9}>
          <Svg w={7} h={8} stroke="#555" sw={1}><path d="M.5 0v8" /><path d="M6.500 0v8L2 4z" fill="#555" /></Svg>
          <Svg w={5} h={8} stroke="none"><path d="M5 0v8L0 4z" fill="#555" /></Svg>
          <Svg w={5} h={8} stroke="none"><path d="M0 0v8l5-4z" fill="#555" /></Svg>
          <Svg w={7} h={8} stroke="#555" sw={1}><path d="M6.500 0v8" /><path d="M.5 0v8L5 4z" fill="#555" /></Svg>
        </StatusCell>
        <StatusCell $w={67} $gap={10}>
          <Svg w={11} h={11} stroke="#bbb" sw={3}><path d="M0 1.500h11M0 5.500h11M0 9.500h11" strokeDasharray="3 1" /></Svg>
          <Svg w={11} h={11} stroke="#b0b0b0" sw={1}><path d="M0 .500h11v6.500H0z" fill="#b0b0b0" /><path d="M0 9.500h11" strokeWidth="3" strokeDasharray="3 1" /></Svg>
          <Svg w={11} h={11} stroke="none"><rect width="11" height="11" fill="#666" /></Svg>
        </StatusCell>
      </StatusBar>
      <Taskbar>
        <StartButton>
          <svg width="16" height="16" viewBox="0 0 16 16" fill="#fff">
            <path d="M0 2.300L6.500 1.400V7.500H0zM7.400 1.300L16 0V7.500H7.400zM0 8.400H6.500V14.600L0 13.700zM7.400 8.400H16V16L7.400 14.800z" />
          </svg>
        </StartButton>
        <TaskSearch>
          <Svg w={22} h={22} stroke="#111" sw={2.4}><circle cx="11" cy="11" r="9" /></Svg>
          <span>Type here to search</span>
          <Svg w={14} h={18} stroke="#333" sw={1}>
            <rect x="4" y="1" width="6" height="10" rx="3" />
            <path d="M1.500 8v1a5.500 5.500 0 0 0 11 0V8M7 14.500V17M3.500 17h7" />
          </Svg>
        </TaskSearch>
        <TaskApps>
          <TaskApp>
            <svg width="22" height="22" viewBox="0 0 22 22">
              <path d="M1 12C1 5 6 1 11.500 1S21 5 21 12v1.500H7.500c.5 3 3 4.500 6 4.500 2.500 0 4.500-.6 6.500-2v4.500c-2 1-4.500 1.500-7 1.500C6 21 1 18 1 12zM7.500 9.500H15C15 7.200 13.500 6 11.200 6S8 7.300 7.500 9.500z" fill="#0f7fd6" />
            </svg>
          </TaskApp>
          <TaskApp>
            <svg width="24" height="24" viewBox="0 0 24 24">
              <path d="M0 8L12 0l12 8v14H0z" fill="#1c9be6" />
              <path d="M0 8l12 8 12-8v14H0z" fill="#26aef0" />
              <path d="M0 8l12 7 12-7-12-3z" fill="#eaf6ff" />
            </svg>
          </TaskApp>
          <TaskApp>
            <svg width="24" height="18" viewBox="0 0 24 18">
              <path d="M0 0h7l3 7 2-5 2 5 3-7h7l-7 18h-4l-1-4-1 4H7z" fill="#e3261d" />
              <path d="M9 12l3-7 3 7-3-3z" fill="#ff8a3c" />
            </svg>
          </TaskApp>
          <TaskApp>
            <svg width="24" height="24" viewBox="0 0 24 24">
              <path d="M1 0h11l3 3v9l-6 10H1z" fill="#dfe3e8" />
              <path d="M3 4h8M3 7h8M3 10h5M3 13h4M3 16h4" stroke="#888" />
              <path d="M9 14q0-3 3-3h6v-1c0-2-6-2-6 0v2h-3z" fill="#3d77aa" />
              <path d="M23 13q0 3-3 3h-5v3c0 3 7 3 7 0v-3h1z" fill="#f5cf47" />
              <path d="M9 14h3v2H9z" fill="#3d77aa" />
            </svg>
          </TaskApp>
          <TaskApp>
            <svg width="24" height="24" viewBox="0 0 24 24">
              <path d="M1.500 23l1.600-5.800A10.800 10.800 0 1 1 7 20.900z" fill="#25d366" stroke="#fff" strokeWidth="1.600" />
              <path d="M8.500 6.800c-1 .7-1.400 2-.8 3.600 1 2.800 3.300 5 6 6 1.500.5 2.800.1 3.500-1 .3-.5.200-1-.2-1.200l-2-1c-.4-.2-.7-.1-1 .2l-.6.8c-1.500-.6-2.800-1.800-3.500-3.300l.7-.7c.2-.3.300-.6.100-1l-.9-2c-.2-.5-.7-.6-1.300-.4z" fill="#fff" />
            </svg>
          </TaskApp>
          <TaskApp $open>
            <svg width="22" height="20" viewBox="0 0 22 20">
              <path d="M0 1h8l2 2h-4l-2 2H0z" fill="#f4c95d" />
              <path d="M0 4h22v16H0z" fill="#fbe08d" />
              <path d="M7 12h8v2h3v6H4v-6h3z" fill="#2f9fe3" />
              <path d="M9 16h4v4H9z" fill="#fbe08d" />
            </svg>
          </TaskApp>
          <TaskApp $open>
            <svg width="22" height="22" viewBox="0 0 22 22">
              <rect width="22" height="22" fill="#b30b00" />
              <path d="M3 17c4-2 7-8 7-12 0-2-1-2-1 0 0 5 5 9 10 9-5 0-11 1-15 4z" fill="none" stroke="#fff" strokeWidth="1.200" />
            </svg>
          </TaskApp>
          <TaskApp $open $active>
            <svg width="22" height="22" viewBox="0 0 22 22">
              <rect width="22" height="22" rx="1" fill="#f4f6f8" />
              <g transform="translate(1 1)"><TableauMark size={20} mono /></g>
            </svg>
          </TaskApp>
        </TaskApps>
        <Tray>
          <TrayItem $w={24}><Svg w={12} h={8} stroke="#fff" sw={1}><path d="M.5 7L6 1.500 11.500 7" /></Svg></TrayItem>
          <TrayItem $w={24}>
            <Svg w={15} h={9} stroke="#fff" sw={1}><path d="M.5.500h12v8H.5z" /><path d="M2 2h7v5H2z" fill="#fff" stroke="none" /><path d="M14 3v3" /></Svg>
          </TrayItem>
          <TrayItem $w={24}>
            <Svg w={17} h={14} stroke="#fff" sw={1}>
              <path d="M1 4.500h3L8 1v12L4 9.500H1z" />
              <path d="M10.500 4.500q1.500 2.500 0 5M12.500 3q2.500 4 0 8M14.500 1.500q3.500 5.500 0 11" />
            </Svg>
          </TrayItem>
          <TrayItem $w={24}>
            <Svg w={16} h={14} stroke="#777" sw={1}>
              <path d="M5 5q5-4 10-5M8 8q4-3 7-4M11 11q2-2 4-3" />
              <circle cx="4.500" cy="9.500" r="4.500" fill="#d9202f" stroke="none" />
              <path d="M3 8l3 3M6 8l-3 3" stroke="#fff" />
            </Svg>
          </TrayItem>
          <TrayItem $w={36}>ENG</TrayItem>
          <Clock>
            <div>10:17</div>
            <div>08-10-2023</div>
          </Clock>
          <TrayItem $w={46}>
            <Svg w={16} h={15} stroke="#fff" sw={1}><path d="M.5.500h15v11h-5L8 14l-2-2.500H.5z" /></Svg>
          </TrayItem>
        </Tray>
      </Taskbar>
    </Page>
  );
}
